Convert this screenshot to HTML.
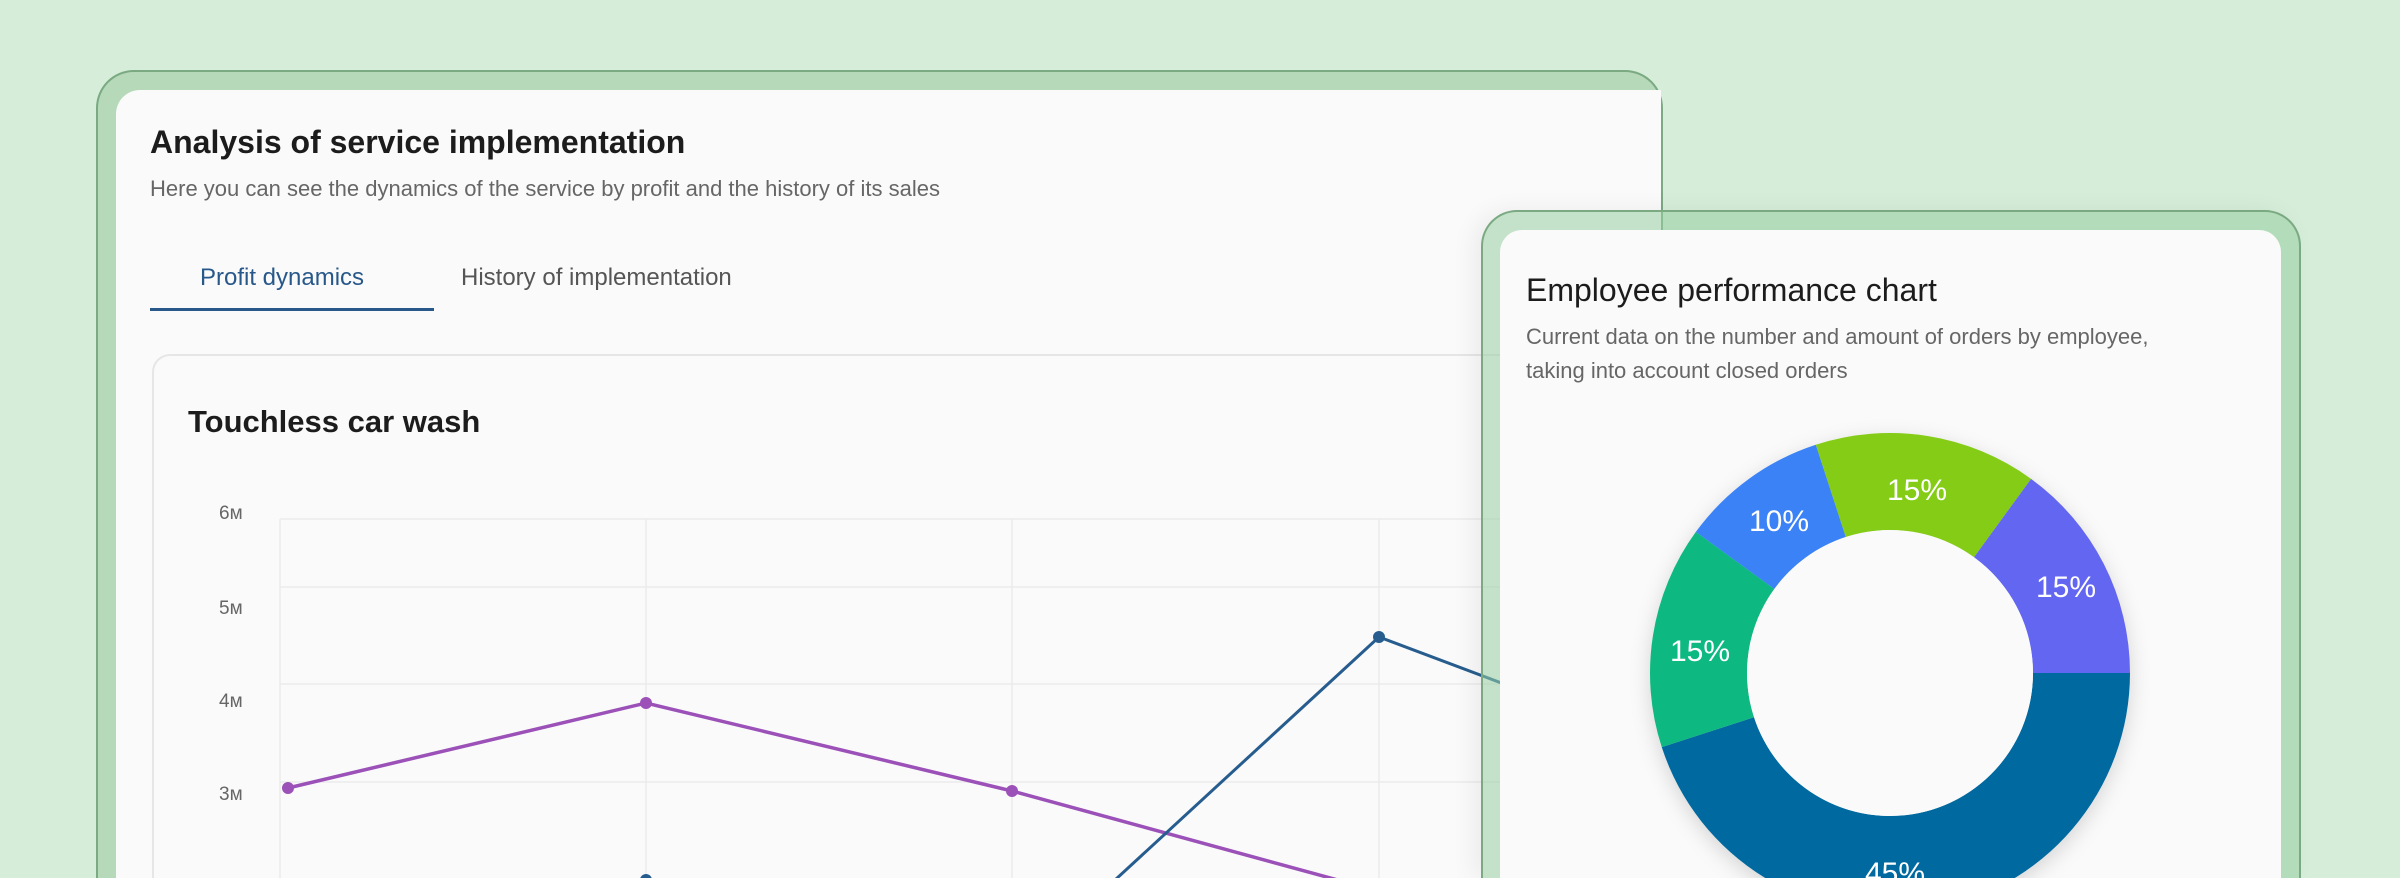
<!DOCTYPE html>
<html><head><meta charset="utf-8"><style>
*{margin:0;padding:0;box-sizing:border-box}
html,body{width:2400px;height:878px;overflow:hidden}
body{background:#d6eed9;font-family:"Liberation Sans",Arial,sans-serif}
#w{position:relative;width:2400px;height:878px;overflow:hidden;background:#d6eed9}
.lf{position:absolute;left:96px;top:70px;width:1567px;height:808px;background:#b5d9b9;border:2px solid #7aa982;border-bottom:none;border-radius:38px 38px 0 0}
.lc{position:absolute;left:116px;top:90px;width:1545px;height:788px;background:#fafafa;border-radius:24px 0 0 0}
.t1{position:absolute;left:150px;top:124px;font-size:32px;font-weight:bold;color:#1c1c1c}
.s1{position:absolute;left:150px;top:176px;font-size:22px;color:#666}
.tab{position:absolute;top:264px;font-size:24px}
.ul{position:absolute;left:150px;top:308px;width:284px;height:3px;background:#28588a}
.cc{position:absolute;left:152px;top:354px;width:1400px;height:524px;border:2px solid #e6e6e6;border-bottom:none;border-radius:18px 18px 0 0;background:#fafafa}
.t2{position:absolute;left:188px;top:404px;font-size:31px;font-weight:bold;color:#1c1c1c}
.yl{position:absolute;left:219px;font-size:19px;color:#666}
.rf{position:absolute;left:1481px;top:210px;width:820px;height:668px;background:rgba(150,205,160,.55);border:2px solid #7aa982;border-bottom:none;border-radius:36px 36px 0 0;box-shadow:-8px 0 24px rgba(0,0,0,.06)}
.rc{position:absolute;left:1500px;top:230px;width:781px;height:648px;background:#fafafa;border-radius:22px 22px 0 0}
.t3{position:absolute;left:1526px;top:272px;font-size:32px;color:#1c1c1c}
.s3{position:absolute;left:1526px;top:320px;font-size:22px;line-height:34px;color:#666}
</style></head><body><div id="w">
<div class="lf"></div>
<div class="lc"></div>
<div class="t1">Analysis of service implementation</div>
<div class="s1">Here you can see the dynamics of the service by profit and the history of its sales</div>
<div class="tab" style="left:200px;color:#28588a">Profit dynamics</div>
<div class="tab" style="left:461px;color:#555">History of implementation</div>
<div class="ul"></div>
<div class="cc"></div>
<div class="t2">Touchless car wash</div>
<div class="yl" style="top:503px">6м</div>
<div class="yl" style="top:598px">5м</div>
<div class="yl" style="top:691px">4м</div>
<div class="yl" style="top:784px">3м</div>
<svg style="position:absolute;left:0;top:0" width="1520" height="878">
<g stroke="#ebebeb" stroke-width="1.5">
<line x1="280" y1="519" x2="1520" y2="519"/><line x1="280" y1="587" x2="1520" y2="587"/>
<line x1="280" y1="684" x2="1520" y2="684"/><line x1="280" y1="782" x2="1520" y2="782"/>
<line x1="280" y1="519" x2="280" y2="878"/><line x1="646" y1="519" x2="646" y2="878"/>
<line x1="1012" y1="519" x2="1012" y2="878"/><line x1="1379" y1="519" x2="1379" y2="878"/>
</g>
<polyline points="288,788 646,703 1012,791 1345,882" fill="none" stroke="#9b51b8" stroke-width="3.5"/>
<g fill="#9b51b8"><circle cx="288" cy="788" r="6"/><circle cx="646" cy="703" r="6"/><circle cx="1012" cy="791" r="6"/></g>
<polyline points="1115,880 1379,637 1520,690" fill="none" stroke="#275d8e" stroke-width="3"/>
<g fill="#275d8e"><circle cx="1379" cy="637" r="6"/><circle cx="646" cy="880" r="6"/></g>
</svg>
<div class="rf"></div>
<div class="rc"></div>
<div class="t3">Employee performance chart</div>
<div class="s3">Current data on the number and amount of orders by employee,<br>taking into account closed orders</div>
<svg style="position:absolute;left:1600px;top:380px" width="580" height="498" viewBox="1600 380 580 498">
<defs><filter id="sh" x="-20%" y="-20%" width="140%" height="140%"><feDropShadow dx="0" dy="6" stdDeviation="10" flood-opacity=".15"/></filter></defs>
<g filter="url(#sh)" transform="translate(1890 673)">
<path d="M240 0 A240 240 0 0 1 -228.25 74.16 L-136 44.19 A143 143 0 0 0 143 0Z" fill="#05699f"/>
<path d="M-228.25 74.16 A240 240 0 0 1 -194.16 -141.07 L-115.69 -84.05 A143 143 0 0 0 -136 44.19Z" fill="#10b981"/>
<path d="M-194.16 -141.07 A240 240 0 0 1 -74.16 -228.25 L-44.19 -136 A143 143 0 0 0 -115.69 -84.05Z" fill="#3b82f6"/>
<path d="M-74.16 -228.25 A240 240 0 0 1 141.07 -194.16 L84.05 -115.69 A143 143 0 0 0 -44.19 -136Z" fill="#84cc16"/>
<path d="M141.07 -194.16 A240 240 0 0 1 240 0 L143 0 A143 143 0 0 0 84.05 -115.69Z" fill="#6366f1"/>
</g>
<circle cx="1890" cy="673" r="143" fill="#fafafa"/>
<g font-family="Liberation Sans, Arial, sans-serif" font-size="30" fill="#fff" text-anchor="middle">
<text x="1917" y="500">15%</text><text x="1779" y="531">10%</text><text x="2066" y="597">15%</text>
<text x="1700" y="661">15%</text><text x="1895" y="883">45%</text></g>
</svg>
</div></body></html>
